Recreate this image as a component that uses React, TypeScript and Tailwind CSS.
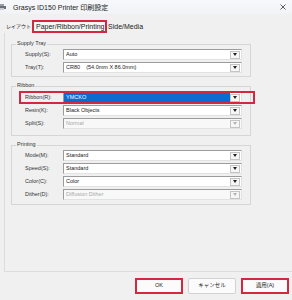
import React from "react";

const FONT = "font-['Liberation_Sans','Noto_Sans_CJK_JP',sans-serif]";

function Arrow({ disabled }: { disabled?: boolean }) {
  return (
    <div className="w-[10px] h-[8px] mr-[1px] border border-[#c4c4c4] bg-[#f6f6f6] flex items-center justify-center shrink-0">
      <svg width="4" height="3" viewBox="0 0 4 3">
        <path d="M0 0H4L2 3Z" fill={disabled ? "#b4b4b4" : "#222"} />
      </svg>
    </div>
  );
}

function Combo({ value, disabled, selected }: { value: string; disabled?: boolean; selected?: boolean }) {
  return (
    <div
      className={`w-[179px] h-[11px] flex items-center border border-t-[#9c9c9c] border-l-[#9c9c9c] border-r-[#e2e2e2] border-b-[#e2e2e2] ${
        disabled ? "bg-[#f8f8f8]" : "bg-white"
      }`}
    >
      <div
        className={`flex-1 h-full flex items-center pl-[2px] text-[5.5px] leading-none whitespace-pre ${
          selected ? "bg-[#0b6bd0] text-white" : disabled ? "text-[#a8a8a8]" : "text-[#222]"
        }`}
      >
        {value}
      </div>
      <Arrow disabled={disabled} />
    </div>
  );
}

function Row({ label, children, marked }: { label: string; children: React.ReactNode; marked?: boolean }) {
  return (
    <div className="relative flex items-center h-[11px]">
      <div className="w-[38px] text-[5.5px] leading-none text-[#333]">{label}</div>
      {children}
      {marked && (
        <div className="absolute left-[-6px] right-[-5px] top-[-1px] bottom-[-1px] border-2 border-[#d4283e]" />
      )}
    </div>
  );
}

function Group({ title, children, className }: { title: string; children: React.ReactNode; className: string }) {
  return (
    <div className={`relative w-[240px] border border-[#d6d6d6] pl-[13px] flex flex-col gap-[2px] ${className}`}>
      <div className="absolute left-[4px] top-[-4px] px-[1px] bg-[#f0f0f0] text-[5.5px] leading-none text-[#333]">
        {title}
      </div>
      {children}
    </div>
  );
}

export default function App() {
  return (
    <div className={`w-[292px] h-[300px] bg-[#f0f0f0] flex flex-col overflow-hidden ${FONT}`}>
      {/* Title bar */}
      <div className="h-[14px] shrink-0 flex items-center bg-gradient-to-b from-[#f6f8fb] to-[#f1f3f6] relative">
        <svg width="7" height="6" viewBox="0 0 7 6" className="ml-[-1px] shrink-0">
          <rect x="1" y="0" width="4" height="2" fill="#9aa0a8" />
          <rect x="0" y="2" width="7" height="3" fill="#6c727a" />
          <rect x="1" y="4" width="4" height="2" fill="#c9ccd0" />
        </svg>
        <span className="ml-[7px] text-[7px] leading-none text-[#222]">Grasys ID150 Printer 印刷設定</span>
        <svg width="6" height="6" viewBox="0 0 6 6" className="absolute left-[280px] top-[4px]">
          <path d="M0.5 0.5L5.5 5.5M5.5 0.5L0.5 5.5" stroke="#333" strokeWidth="0.8" />
        </svg>
      </div>

      {/* Tabs */}
      <div className="h-[19px] shrink-0 flex items-end">
        <div className="flex items-center h-[13px] ml-[6px]">
          <span className="mr-[1px] whitespace-nowrap text-[5px] leading-none text-[#222]">レイアウト</span>
          <div className="h-[13px] w-[75px] border-2 border-[#d4283e] bg-[#f7f7f7] flex items-center pl-[2px]">
            <span className="text-[7px] leading-none text-[#222]">Paper/Ribbon/Printing</span>
          </div>
          <span className="ml-[1px] text-[7px] leading-none text-[#222]">Side/Media</span>
        </div>
      </div>

      {/* Panel */}
      <div className="ml-[4px] h-[239px] shrink-0 border-l border-b border-[#dcdcdc] pl-[6px] flex flex-col">
        <Group title="Supply Tray" className="mt-[11px] pt-[4px] pb-[3px]">
          <Row label="Supply(S):">
            <Combo value="Auto" />
          </Row>
          <Row label="Tray(T):">
            <Combo value={"CR80    (54.0mm X 86.0mm)"} />
          </Row>
        </Group>

        <Group title="Ribbon" className="mt-[9px] pt-[5px] pb-[6px]">
          <Row label="Ribbon(R):" marked>
            <Combo value="YMCKO" selected />
          </Row>
          <Row label="Resin(K):">
            <Combo value="Black Objects" />
          </Row>
          <Row label="Split(S):">
            <Combo value="Normal" disabled />
          </Row>
        </Group>

        <Group title="Printing" className="mt-[9px] pt-[4px] pb-[4px]">
          <Row label="Mode(M):">
            <Combo value="Standard" />
          </Row>
          <Row label="Speed(S):">
            <Combo value="Standard" />
          </Row>
          <Row label="Color(C):">
            <Combo value="Color" />
          </Row>
          <Row label="Dither(D):">
            <Combo value="Diffusion Dither" disabled />
          </Row>
        </Group>
      </div>

      {/* Buttons */}
      <div className="flex pl-[135px] gap-[5px] pt-[6px]">
        <div className="w-[48px] h-[16px] border-2 border-[#d4283e] bg-[#fbfbfb] flex items-center justify-center text-[5.5px] leading-none text-[#222]">
          OK
        </div>
        <div className="w-[48px] h-[16px] border border-[#d2d2d2] rounded-[2px] bg-[#fbfbfb] flex items-center justify-center text-[5.5px] leading-none text-[#222]">
          キャンセル
        </div>
        <div className="w-[48px] h-[16px] border-2 border-[#d4283e] bg-[#fbfbfb] flex items-center justify-center text-[5.5px] leading-none text-[#222]">
          適用(A)
        </div>
      </div>
    </div>
  );
}
